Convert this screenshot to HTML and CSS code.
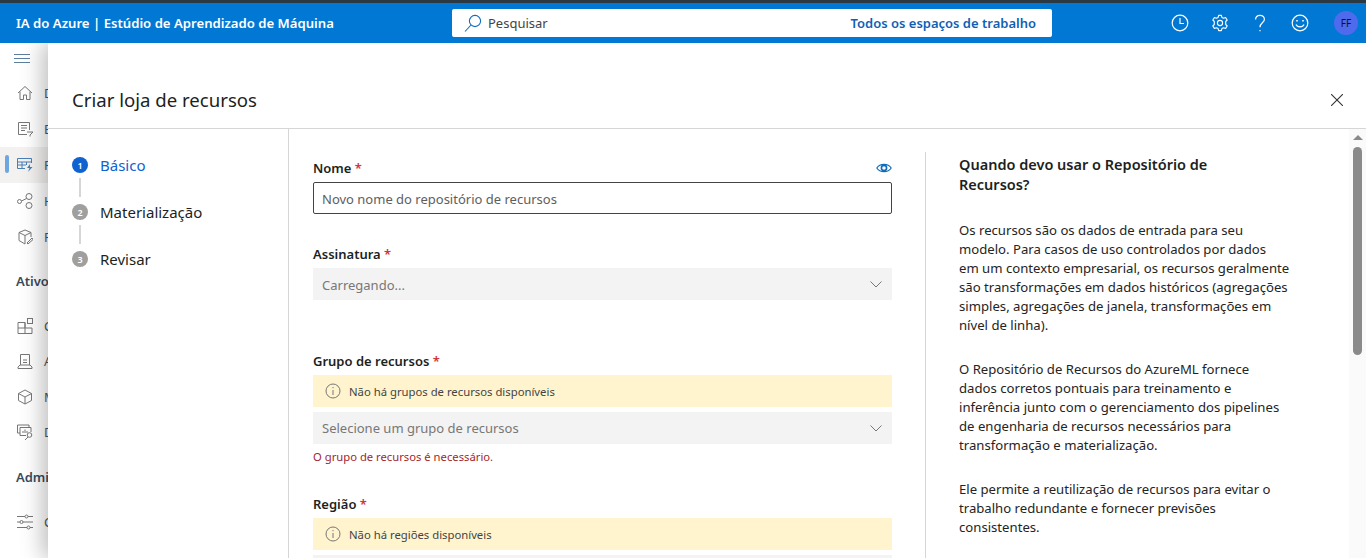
FILE: index.html

```html
<!DOCTYPE html>
<html lang="pt-BR">
<head>
  <meta charset="UTF-8">
  <title>Criar loja de recursos</title>
  <link rel="stylesheet" href="styles.css">
</head>
<body>

<div class="topbar">
  <div class="brand">IA do Azure | Estúdio de Aprendizado de Máquina</div>
  <div class="search">
    <svg class="search-icon" width="20" height="20" viewBox="0 0 20 20" fill="none" stroke="#0f6cbd" stroke-width="1.1"><circle cx="12" cy="8" r="5.6"/><path d="M8 12 L2 18.5"/></svg>
    <span class="search-text">Pesquisar</span>
    <span class="search-scope">Todos os espaços de trabalho</span>
  </div>
  <div class="top-icons">
    <svg width="20" height="20" viewBox="0 0 20 20" fill="none" stroke="#fff" stroke-width="1.2"><circle cx="10" cy="10" r="7.8"/><path d="M10 5 V10.5 H14"/></svg>
    <svg width="20" height="20" viewBox="0 0 20 20" fill="none" stroke="#fff" stroke-width="1.1" stroke-linejoin="round"><circle cx="10" cy="10" r="2.6"/><path d="M8.6 2.4 H11.4 L11.9 4.4 L13.6 5.3 L15.6 4.6 L17.2 7 L15.7 8.5 V11.5 L17.2 13 L15.6 15.4 L13.6 14.7 L11.9 15.6 L11.4 17.6 H8.6 L8.1 15.6 L6.4 14.7 L4.4 15.4 L2.8 13 L4.3 11.5 V8.5 L2.8 7 L4.4 4.6 L6.4 5.3 L8.1 4.4 Z"/></svg>
    <svg width="20" height="20" viewBox="0 0 20 20" fill="none" stroke="#fff" stroke-width="1.2"><path d="M5.6 6.5 C5.6 1 14.4 1 14.4 6.3 C14.4 10 10 9.6 10 14.2"/><path d="M10 17 V18.3"/></svg>
    <svg width="20" height="20" viewBox="0 0 20 20" fill="none" stroke="#fff" stroke-width="1.2"><circle cx="10" cy="10" r="7.8"/><path d="M6 11.4 C7.4 14.6 12.6 14.6 14 11.4"/><path d="M7 7 V8.4 M13 7 V8.4" stroke-width="1.6"/></svg>
    <div class="avatar">FF</div>
  </div>
</div>

<div class="sidebar">
  <svg class="menu-icon" width="16" height="10" viewBox="0 0 16 10" stroke="#5c7f9e" stroke-width="1"><path d="M0 .5 H16 M0 4.5 H16 M0 8.5 H16"/></svg>
  <div class="nav-item">
    <svg width="16" height="16" viewBox="0 0 16 16" fill="none" stroke="#777"><path d="M1 8 L8 1.5 L15 8 M3 6.5 V14.5 H6.5 V10 H9.5 V14.5 H13 V6.5"/></svg>
    <span>D</span>
  </div>
  <div class="nav-item">
    <svg width="16" height="16" viewBox="0 0 16 16" fill="none" stroke="#777"><path d="M10 13.5 H1.5 V1.5 H12.5 V9 M4 4.5 H10 M4 7 H10 M4 9.5 H8 M10 11 H16 L13 14 V15.5"/></svg>
    <span>E</span>
  </div>
  <div class="nav-item active">
    <svg width="16" height="16" viewBox="0 0 16 16" fill="none" stroke="#4a7fb5"><path d="M8 11.5 H.5 V1.5 H14.5 V6 M.5 5 H14.5 M.5 8 H9 M5 5 V11.5 M9.5 5 V8"/><path d="M13 7 L10 11 H12.5 L11 15 L15.5 10 H13 Z" fill="#4a7fb5" stroke="none"/></svg>
    <span>R</span>
  </div>
  <div class="nav-item">
    <svg width="16" height="16" viewBox="0 0 16 16" fill="none" stroke="#777"><circle cx="2.5" cy="8.5" r="2"/><circle cx="12" cy="3.5" r="3"/><circle cx="12" cy="12.5" r="3"/><path d="M4.5 8 L9.5 5.5"/></svg>
    <span>H</span>
  </div>
  <div class="nav-item">
    <svg width="16" height="16" viewBox="0 0 16 16" fill="none" stroke="#777"><path d="M8 1 L14 3.5 V8 M8 1 L2 3.5 V11.5 L8 15 M2 3.5 L8 6.5 L14 3.5 M8 6.5 V15 M10 14 L15 9 L16 10.5 L11 15 Z"/></svg>
    <span>R</span>
  </div>
  <div class="nav-title">Ativo</div>
  <div class="nav-item nav-item-tight">
    <svg width="16" height="16" viewBox="0 0 16 16" fill="none" stroke="#777"><path d="M1 4.5 H8 V15.5 H1 Z M1 10 H15 V15.5 H8 M8 10 V4.5"/><rect x="10.5" y=".5" width="5" height="5"/></svg>
    <span>C</span>
  </div>
  <div class="nav-item nav-item-tight">
    <svg width="16" height="16" viewBox="0 0 16 16" fill="none" stroke="#777"><path d="M3.5 12 V1.5 H12.5 V12 M1 15.5 H15 V14 L13 12 H3 L1 14 Z M6 7 H10 M6 9.5 H10"/></svg>
    <span>A</span>
  </div>
  <div class="nav-item nav-item-tight">
    <svg width="16" height="16" viewBox="0 0 16 16" fill="none" stroke="#777"><path d="M8 1 L14.5 4.5 V11.5 L8 15 L1.5 11.5 V4.5 Z M1.5 4.5 L8 8 L14.5 4.5 M8 8 V15"/></svg>
    <span>M</span>
  </div>
  <div class="nav-item nav-item-tight">
    <svg width="16" height="16" viewBox="0 0 16 16" fill="none" stroke="#777"><path d="M3 9 H.5 V1 H12 V3 M3 3.5 H14 V8 M3 3.5 V11.5 H9 M6 9 V7 M8 9 V5.5 M10 9 V7"/><circle cx="12.5" cy="11" r="2.3"/><path d="M11 13 L8 16"/></svg>
    <span>D</span>
  </div>
  <div class="nav-title nav-title-admin">Admi</div>
  <div class="nav-item">
    <svg width="16" height="16" viewBox="0 0 16 16" fill="none" stroke="#777"><path d="M0 2.5 H8 M11 2.5 H16 M0 8 H3 M6 8 H16 M0 13.5 H10 M13 13.5 H16"/><circle cx="9.5" cy="2.5" r="1.5"/><circle cx="4.5" cy="8" r="1.5"/><circle cx="11.5" cy="13.5" r="1.5"/></svg>
    <span>C</span>
  </div>
</div>

<div class="panel">
  <div class="panel-header">
    <h1>Criar loja de recursos</h1>
    <svg class="close-icon" width="12" height="12" viewBox="0 0 12 12" stroke="#333" stroke-width="1.1"><path d="M0 0 L12 12 M12 0 L0 12"/></svg>
  </div>
  <div class="panel-body">
    <div class="steps">
      <div class="step current"><span class="step-num">1</span><span>Básico</span></div>
      <div class="step-line"></div>
      <div class="step"><span class="step-num">2</span><span>Materialização</span></div>
      <div class="step-line"></div>
      <div class="step"><span class="step-num">3</span><span>Revisar</span></div>
    </div>

    <div class="form">
      <div class="field">
        <div class="label-row">
          <label>Nome <em>*</em></label>
          <svg width="16" height="10" viewBox="0 0 16 10" fill="none" stroke="#0f6cbd" stroke-width="1.2"><path d="M.8 5 C4 .2 12 .2 15.2 5 C12 9.8 4 9.8 .8 5 Z"/><circle cx="8" cy="5" r="2.6" stroke-width="1.6"/></svg>
        </div>
        <div class="input">Novo nome do repositório de recursos</div>
      </div>

      <div class="field field-spaced">
        <div class="label-row"><label>Assinatura <em>*</em></label></div>
        <div class="select select-loading">Carregando...
          <svg width="12" height="7" viewBox="0 0 12 7" fill="none" stroke="#777"><path d="M.5 .5 L6 6 L11.5 .5"/></svg>
        </div>
      </div>

      <div class="field field-spaced">
        <div class="label-row"><label>Grupo de recursos <em>*</em></label></div>
        <div class="notice">
          <svg width="16" height="16" viewBox="0 0 16 16" fill="none" stroke="#777"><circle cx="8" cy="8" r="7"/><path d="M8 7 V12 M8 4 V5.2"/></svg>
          Não há grupos de recursos disponíveis
        </div>
        <div class="select">Selecione um grupo de recursos
          <svg width="12" height="7" viewBox="0 0 12 7" fill="none" stroke="#777"><path d="M.5 .5 L6 6 L11.5 .5"/></svg>
        </div>
        <div class="error">O grupo de recursos é necessário.</div>
      </div>

      <div class="field field-region">
        <div class="label-row"><label>Região <em>*</em></label></div>
        <div class="notice">
          <svg width="16" height="16" viewBox="0 0 16 16" fill="none" stroke="#777"><circle cx="8" cy="8" r="7"/><path d="M8 7 V12 M8 4 V5.2"/></svg>
          Não há regiões disponíveis
        </div>
        <div class="select"></div>
      </div>
    </div>

    <div class="help">
      <h2>Quando devo usar o Repositório de<br>Recursos?</h2>
      <p>Os recursos são os dados de entrada para seu<br>modelo. Para casos de uso controlados por dados<br>em um contexto empresarial, os recursos geralmente<br>são transformações em dados históricos (agregações<br>simples, agregações de janela, transformações em<br>nível de linha).</p>
      <p>O Repositório de Recursos do AzureML fornece<br>dados corretos pontuais para treinamento e<br>inferência junto com o gerenciamento dos pipelines<br>de engenharia de recursos necessários para<br>transformação e materialização.</p>
      <p>Ele permite a reutilização de recursos para evitar o<br>trabalho redundante e fornecer previsões<br>consistentes.</p>
    </div>

    <div class="scrollbar">
      <div class="scroll-up"></div>
      <div class="scroll-thumb"></div>
    </div>
  </div>
</div>

</body>
</html>
```

FILE: styles.css

```css
* {
  box-sizing: border-box;
}
html, body {
  height: 100%;
}
body {
  margin: 0;
  font-family: "Noto Sans", "Open Sans", Arial, sans-serif;
  background: #fff;
  color: #201f1e;
  overflow: hidden;
  position: relative;
}
.topbar {
  height: 43px;
  background: #0078d4;
  border-top: 3px solid #2b3a42;
  display: flex;
  align-items: center;
  padding: 0 8px 0 16px;
  color: #fff;
  position: relative;
  z-index: 1;
}
.brand {
  font-size: 13.15px;
  font-weight: 600;
  width: 436px;
  white-space: nowrap;
}
.search {
  width: 600px;
  height: 28px;
  background: #fff;
  border-radius: 2px;
  display: flex;
  align-items: center;
  padding: 0 16px 0 11px;
  font-size: 13px;
}
.search-icon {
  margin-right: 5px;
}
.search-text {
  color: #444;
  flex: 1;
}
.search-scope {
  color: #0f5fb5;
  font-weight: 600;
}
.top-icons {
  flex: 1;
  display: flex;
  align-items: center;
  justify-content: flex-end;
  gap: 20px;
}
.avatar {
  width: 24px;
  height: 24px;
  margin-left: 4px;
  border-radius: 50%;
  background: #4f6bed;
  color: #111;
  font-size: 10px;
  display: flex;
  align-items: center;
  justify-content: center;
}
.sidebar {
  width: 48px;
  padding-top: 11px;
  font-size: 13px;
  color: #555;
  white-space: nowrap;
}
.menu-icon {
  display: block;
  margin: 0 0 11px 14px;
}
.nav-item {
  height: 36px;
  display: flex;
  align-items: center;
  gap: 11px;
  padding-left: 17px;
}
.nav-item svg {
  flex: none;
}
.nav-item-tight {
  height: 35.5px;
}
.nav-item.active {
  background: #f3f2f1;
  position: relative;
}
.nav-item.active::before {
  content: "";
  position: absolute;
  left: 5px;
  top: 8px;
  width: 4px;
  height: 18px;
  border-radius: 2px;
  background: #6ea6e0;
}
.nav-title {
  font-size: 13px;
  font-weight: 600;
  color: #3b4a5a;
  padding: 9px 0 0 16px;
  height: 45px;
  margin-top: 8px;
}
.nav-title-admin {
  margin-top: 9px;
}
.panel {
  position: absolute;
  left: 48px;
  right: 0;
  top: 43px;
  bottom: 0;
  background: #fff;
  box-shadow: -6px 0 20px rgba(0, 0, 0, 0.25);
  display: flex;
  flex-direction: column;
}
.panel-header {
  height: 86px;
  flex: none;
  border-bottom: 1px solid #d6d6d6;
  display: flex;
  align-items: center;
  justify-content: space-between;
  padding: 28px 23px 0 24px;
}
.panel-header h1 {
  margin: 0;
  font-size: 18.6px;
  font-weight: 400;
}
.panel-body {
  flex: 1;
  min-height: 0;
  display: flex;
  overflow: hidden;
}
.steps {
  width: 241px;
  flex: none;
  border-right: 1px solid #d6d6d6;
  padding: 26px 0 0 24px;
  font-size: 15px;
}
.step {
  display: flex;
  align-items: center;
  gap: 12px;
  height: 20px;
}
.step.current {
  color: #0f62d0;
}
.step-num {
  width: 16px;
  height: 16px;
  border-radius: 50%;
  background: #a19f9d;
  color: #fff;
  font-size: 9px;
  font-weight: 600;
  display: flex;
  align-items: center;
  justify-content: center;
}
.step.current .step-num {
  background: #0f62d0;
}
.step-line {
  width: 2px;
  height: 19px;
  background: #d6d6d6;
  margin: 3px 0 5px 7px;
}
.form {
  width: 636px;
  flex: none;
  padding: 29px 0 0 24px;
  font-size: 13px;
}
.field {
  width: 579px;
}
.field-spaced {
  margin-top: 30px;
}
.field-region {
  margin-top: 28px;
}
.field-spaced + .field-spaced {
  margin-top: 51px;
}
.label-row {
  height: 20px;
  margin-bottom: 4px;
  display: flex;
  align-items: center;
  justify-content: space-between;
}
.label-row label {
  font-weight: 600;
  color: #201f1e;
}
.label-row em {
  font-style: normal;
  color: #d13438;
}
.input {
  height: 32px;
  border: 1px solid #444;
  border-radius: 2px;
  padding: 1px 8px 0;
  display: flex;
  align-items: center;
  color: #605e5c;
}
.select {
  height: 32px;
  background: #f3f3f3;
  padding: 0 10px 0 9px;
  display: flex;
  align-items: center;
  justify-content: space-between;
  color: #777;
}
.select-loading {
  padding-top: 1px;
}
.notice {
  height: 32px;
  background: #fff4ce;
  padding: 0 12px;
  display: flex;
  align-items: center;
  gap: 8px;
  font-size: 11.3px;
  color: #444;
  margin-bottom: 5px;
}
.error {
  font-size: 11.25px;
  color: #a4262c;
  height: 17px;
  margin-top: 5px;
}
.help {
  width: 424px;
  flex: none;
  margin-top: 23px;
  border-left: 1px solid #d6d6d6;
  padding: 2px 40px 0 33px;
  font-size: 13.15px;
  line-height: 19px;
  color: #252423;
  white-space: nowrap;
}
.help h2 {
  margin: 0 0 27px;
  font-size: 14.5px;
  font-weight: 600;
  line-height: 20px;
  color: #201f1e;
}
.help p {
  margin: 0 0 25px;
}
.scrollbar {
  flex: 1;
  background: #fafafa;
  display: flex;
  flex-direction: column;
  align-items: center;
}
.scroll-up {
  width: 0;
  height: 0;
  margin-top: 6px;
  border-left: 5px solid transparent;
  border-right: 5px solid transparent;
  border-bottom: 5px solid #8a8a8a;
}
.scroll-thumb {
  width: 9px;
  height: 208px;
  margin-top: 7px;
  border-radius: 5px;
  background: #8a8a8a;
}
```
